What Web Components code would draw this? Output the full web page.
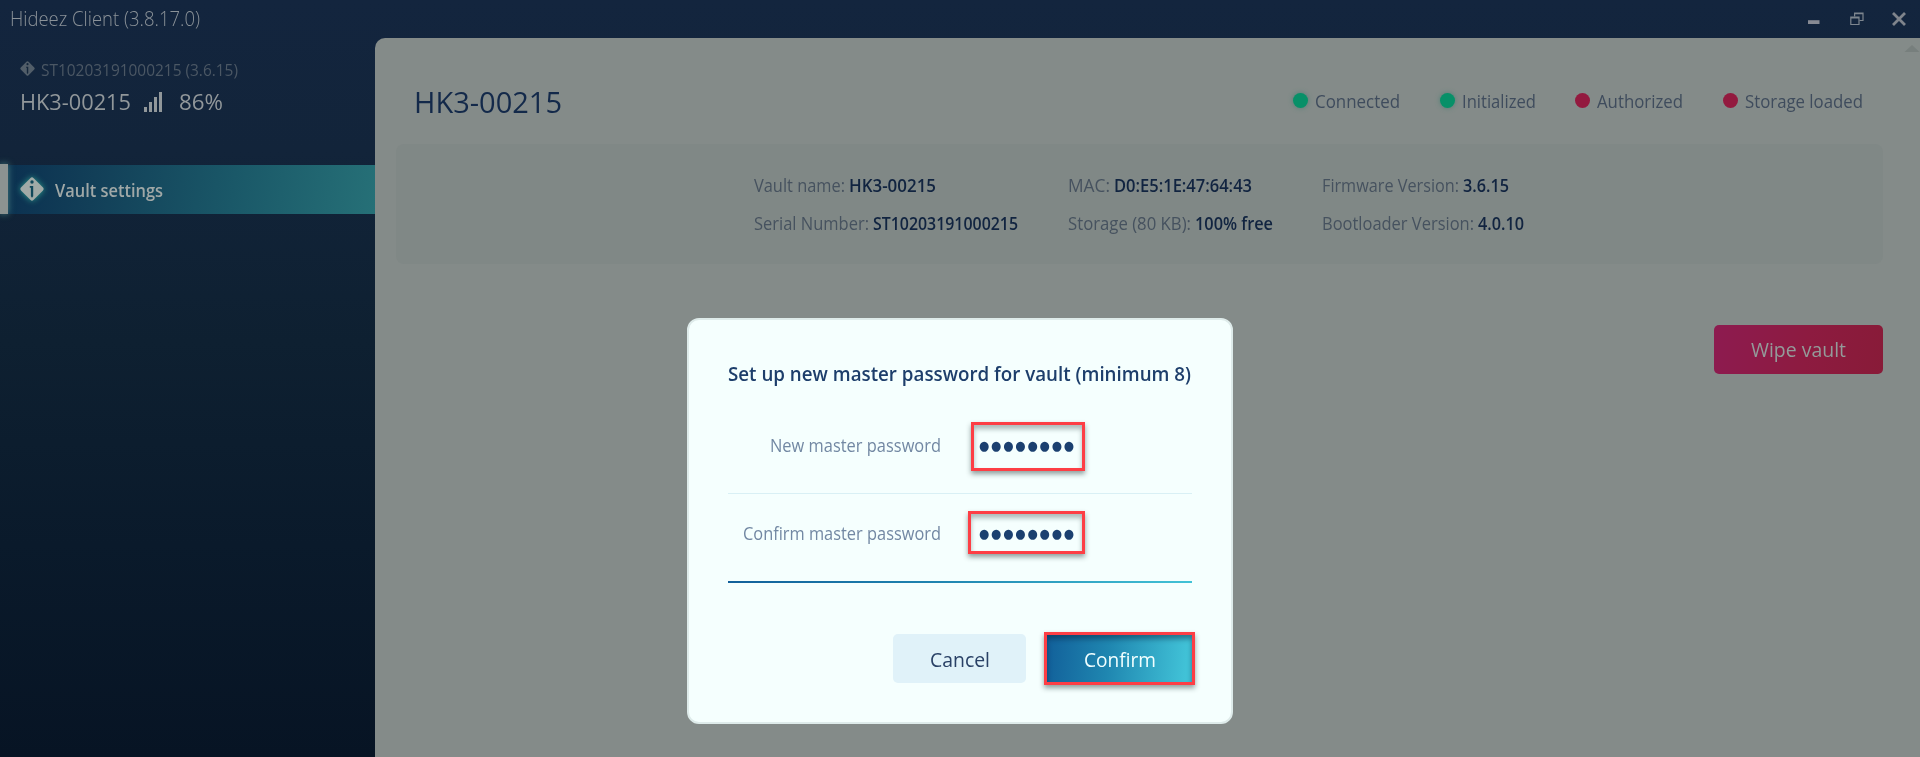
<!DOCTYPE html>
<html lang="en">
<head>
<meta charset="utf-8">
<title>Hideez Client</title>
<style>
html,body{margin:0;height:100%;overflow:hidden;background:#081522}
body{font-family:"Open Sans","Noto Sans",sans-serif}
</style>
</head>
<body>
<hideez-app></hideez-app>
<script>
const define = (name, html, setup) => customElements.define(name, class extends HTMLElement {
  connectedCallback() {
    if (this.shadowRoot) return;
    const t = document.createElement('template');
    t.innerHTML = html;
    this.attachShadow({mode: 'open'}).append(t.content.cloneNode(true));
    if (setup) setup(this, this.shadowRoot);
  }
});

/* One line of text condensed or widened to the width given in "w". */
define('fit-text', `<style>
  :host{display:inline-block;white-space:nowrap;flex:none}
  span{display:inline-block;transform-origin:0 50%}
</style><span><slot></slot></span>`, (el, root) => {
  const w = +el.getAttribute('w'), s = root.querySelector('span');
  const natural = s.getBoundingClientRect().width;
  el.style.width = w + 'px';
  if (natural) s.style.transform = `scaleX(${w / natural})`;
});

define('vault-icon', `<style>:host{display:block;flex:none}svg{display:block;width:100%;height:100%;overflow:visible}</style>
<svg viewBox="0 0 24 24"><path d="M10.3 1.2Q12-.5 13.7 1.2L22.8 10.3Q24.5 12 22.8 13.7L13.7 22.8Q12 24.5 10.3 22.8L1.2 13.7Q-.5 12 1.2 10.3Z" fill="currentColor"/><circle cx="12" cy="5" r="1.7" fill="var(--hole)"/><path d="M9.8 9H13.2V19.3L12 20.8L10.9 19.3V10.8H9.8Z" fill="var(--hole)"/></svg>`);

define('title-bar', `<style>
  :host{display:flex;height:38px;align-items:center;justify-content:space-between;color:#8b9298;box-sizing:border-box;padding:0 14px 0 10px}
  .t{font-size:20px;font-weight:300;line-height:38px}
  .w{display:flex;align-items:center}
  svg{display:block}
</style><fit-text class="t" w="190">Hideez Client (3.8.17.0)</fit-text>
<div class="w">
<svg style="margin-right:30px" width="12" height="14" viewBox="0 0 12 14"><path d="M0 8.2H11.5V12H0Z" fill="#878a93"/></svg>
<svg style="margin-right:28px" width="14" height="14" viewBox="0 0 14 14" fill="none" stroke="#7d858e" stroke-width="1.2"><path d="M4.6 4.5V1H13V8.5H9.5M4.6 1.6H13"/><path d="M.8 5.2H9V12.5H.8ZM.8 6H9"/></svg>
<svg width="14" height="14" viewBox="0 0 14 14" stroke="#7f848c" stroke-width="2.8"><path d="M1 1L13 13M13 1L1 13"/></svg>
</div>`);

define('side-bar', `<style>
  :host{display:block;width:375px;flex:none;padding-top:21px;box-sizing:border-box}
  .s{display:flex;align-items:center;height:22px;padding-left:20px;color:#4b5764;font-size:16px;gap:6px}
  .s vault-icon{width:15px;height:15px;color:#525e69;--hole:#14263b;margin-top:-3px}
  .n{display:flex;align-items:center;height:30px;margin-top:5px;padding-left:20px;color:#91979a;font-size:22px}
  .n svg{margin:1px 17px 0 13px}
  .item{display:flex;align-items:center;height:49px;margin-top:49px;background:linear-gradient(97deg,#0c3251 4%,#123f58 25%,#1a5868 62%,#267077);color:#a0a8a7;font-size:18.5px;font-weight:600}
  .bar{width:8px;height:50px;margin-top:-1px;background:#8c9391;box-shadow:0 0 7px #47817f}
  .item vault-icon{width:24px;height:24px;margin:-1px 11px 0 11.5px;color:#a1aaa7;--hole:#12485a;filter:drop-shadow(0 0 3px #2c9c8c)}
  .item fit-text{margin-top:-1px}
</style>
<div class="s"><vault-icon></vault-icon><fit-text w="197">ST10203191000215 (3.6.15)</fit-text></div>
<div class="n"><fit-text w="111">HK3-00215</fit-text><svg width="18" height="20" viewBox="0 0 18 20" fill="#91979a"><path d="M0 15H3V20H0ZM5 10H8V20H5ZM10 5H13V20H10ZM15 0H18V20H15Z"/></svg><fit-text w="44">86%</fit-text></div>
<div class="item"><div class="bar"></div><vault-icon></vault-icon><fit-text w="108">Vault settings</fit-text></div>`);

define('status-dot', `<style>
  :host{display:flex;align-items:center;gap:7px;font-size:17.5px;color:#3f4c5d}
  i{width:15px;height:15px;margin-top:-1px;border-radius:50%;background:#079068;box-shadow:0 0 5px #4d8075}
  :host([off]) i{background:#931a3f;box-shadow:none}
</style><i></i><slot></slot>`);

define('detail-line', `<style>
  :host{display:flex;height:38px;align-items:center;gap:4px;font-size:17.5px;color:#46525f}
  ::slotted([slot=value]){font-weight:600;color:#112440}
</style><slot></slot><slot name="value"></slot>`);

define('main-panel', `<style>
  :host{display:block;flex:1;background:#848b89;border-radius:10px 0 0 0;box-sizing:border-box;padding:0 37px 0 21px}
  header{display:flex;justify-content:space-between;align-items:center;height:106px;box-sizing:border-box;padding:20px 20px 0 18px}
  h1{margin:2px 0 0;font-size:29.5px;font-weight:400;color:#13294a;line-height:40px}
  .st{display:flex}
  .card{height:120px;box-sizing:border-box;padding:22px 0 0 358px;background:#808886;border-radius:8px;display:grid;grid-template-columns:314px 254px auto;grid-template-rows:38px 38px;justify-content:start}
  .wipe{display:flex;align-items:center;justify-content:center;width:169px;height:49px;margin:60.5px 0 0 auto;border-radius:5px;background:linear-gradient(100deg,#8d1b50,#8d1b40 55%,#881b38);color:#949b9a;font-size:20px}
  .sc{position:absolute;right:0;top:45px}
</style>
<header><h1><fit-text w="148">HK3-00215</fit-text></h1>
<div class="st">
<status-dot style="margin-right:40px"><fit-text w="85">Connected</fit-text></status-dot>
<status-dot style="margin-right:39px"><fit-text w="74">Initialized</fit-text></status-dot>
<status-dot off style="margin-right:40px"><fit-text w="86">Authorized</fit-text></status-dot>
<status-dot off><fit-text w="118">Storage loaded</fit-text></status-dot>
</div></header>
<div class="card">
<detail-line><fit-text w="91">Vault name:</fit-text><fit-text slot="value" w="87">HK3-00215</fit-text></detail-line>
<detail-line><fit-text w="42">MAC:</fit-text><fit-text slot="value" w="138">D0:E5:1E:47:64:43</fit-text></detail-line>
<detail-line><fit-text w="137">Firmware Version:</fit-text><fit-text slot="value" w="46">3.6.15</fit-text></detail-line>
<detail-line><fit-text w="115">Serial Number:</fit-text><fit-text slot="value" w="145">ST10203191000215</fit-text></detail-line>
<detail-line><fit-text w="123">Storage (80 KB):</fit-text><fit-text slot="value" w="78">100% free</fit-text></detail-line>
<detail-line><fit-text w="152">Bootloader Version:</fit-text><fit-text slot="value" w="46">4.0.10</fit-text></detail-line>
</div>
<div class="wipe"><fit-text w="95">Wipe vault</fit-text></div>
<svg class="sc" width="16" height="7" viewBox="0 0 16 7"><path d="M8 0L15.5 7H.5Z" fill="#777f7d"/></svg>`);

define('mark-box', `<style>
  :host{display:flex;box-sizing:border-box;border:3px solid #fd3e45;box-shadow:0 3px 5px rgba(20,40,40,.45),inset 0 4px 5px rgba(20,40,40,.32)}
</style><slot></slot>`);

define('password-row', `<style>
  :host{display:flex;align-items:flex-start;position:relative;box-sizing:border-box}
  .l{width:214px;display:flex;justify-content:flex-end;font-size:18px;line-height:28px;color:#7288a3}
</style><div class="l"><slot name="label"></slot></div><slot></slot>`);

define('password-dialog', `<style>
  :host{position:absolute;left:687px;top:318px;width:546px;height:406px;box-sizing:border-box;padding:38px 39px 0;border:2px solid #deebea;border-radius:12px;background:#f5fffe;color:#1d3e6b}
  h2{margin:0;font-size:19.5px;line-height:32px;font-weight:600;height:30px}
  .a{height:106px;padding-top:34px;border-bottom:1px solid #d9f0f5}
  .b{height:89px;padding-top:17px;border-bottom:2px solid;border-image:linear-gradient(90deg,#12609a,#1f84b0 45%,#42c2d6) 1}
  .d{font:13px "DejaVu Sans",sans-serif;color:#1b4070}
  .a mark-box{width:114px;height:49px;margin-left:29px;padding-left:5px;line-height:42.5px}
  .b mark-box{width:117px;height:43px;margin-left:26px;padding-left:8px;line-height:40.5px}
  mark-box .d{line-height:inherit;letter-spacing:2px}
  .a fit-text[slot]{margin:9px 1px 0 0}
  .b fit-text[slot]{margin:8px 1px 0 0}
  footer{display:flex;justify-content:flex-end;align-items:center;margin:49px -3px 0 0;height:53px;gap:18px;font-size:20px;color:#294166}
  footer fit-text{margin-top:2px}
  .c{width:133px;height:49px;border-radius:5px;background:#e0f2f9;display:flex;align-items:center;justify-content:center}
  .ok{width:151px;height:53px;align-items:center;justify-content:center;background:linear-gradient(95deg,#12609a,#1f86b0 42%,#41c2d7 95%);color:#f1ffff;box-shadow:0 3px 5px rgba(20,40,40,.45),inset 0 4px 5px rgba(0,25,50,.42)}
</style>
<h2><fit-text w="463">Set up new master password for vault (minimum 8)</fit-text></h2>
<password-row class="a"><fit-text slot="label" w="171">New master password</fit-text><mark-box><fit-text class="d" w="97">●●●●●●●●</fit-text></mark-box></password-row>
<password-row class="b"><fit-text slot="label" w="198">Confirm master password</fit-text><mark-box><fit-text class="d" w="97">●●●●●●●●</fit-text></mark-box></password-row>
<footer><div class="c"><fit-text w="60">Cancel</fit-text></div><mark-box class="ok"><fit-text w="72">Confirm</fit-text></mark-box></footer>`);

define('hideez-app', `<style>
  :host{display:flex;flex-direction:column;position:relative;width:1920px;height:757px;overflow:hidden;background:linear-gradient(180deg,#13253e 0,#12243a 20%,#0e2031 45%,#0a1a2b 72%,#071424 100%)}
  .m{display:flex;flex:1}
</style><title-bar></title-bar><div class="m"><side-bar></side-bar><main-panel></main-panel></div><password-dialog></password-dialog>`);
</script>
</body>
</html>
